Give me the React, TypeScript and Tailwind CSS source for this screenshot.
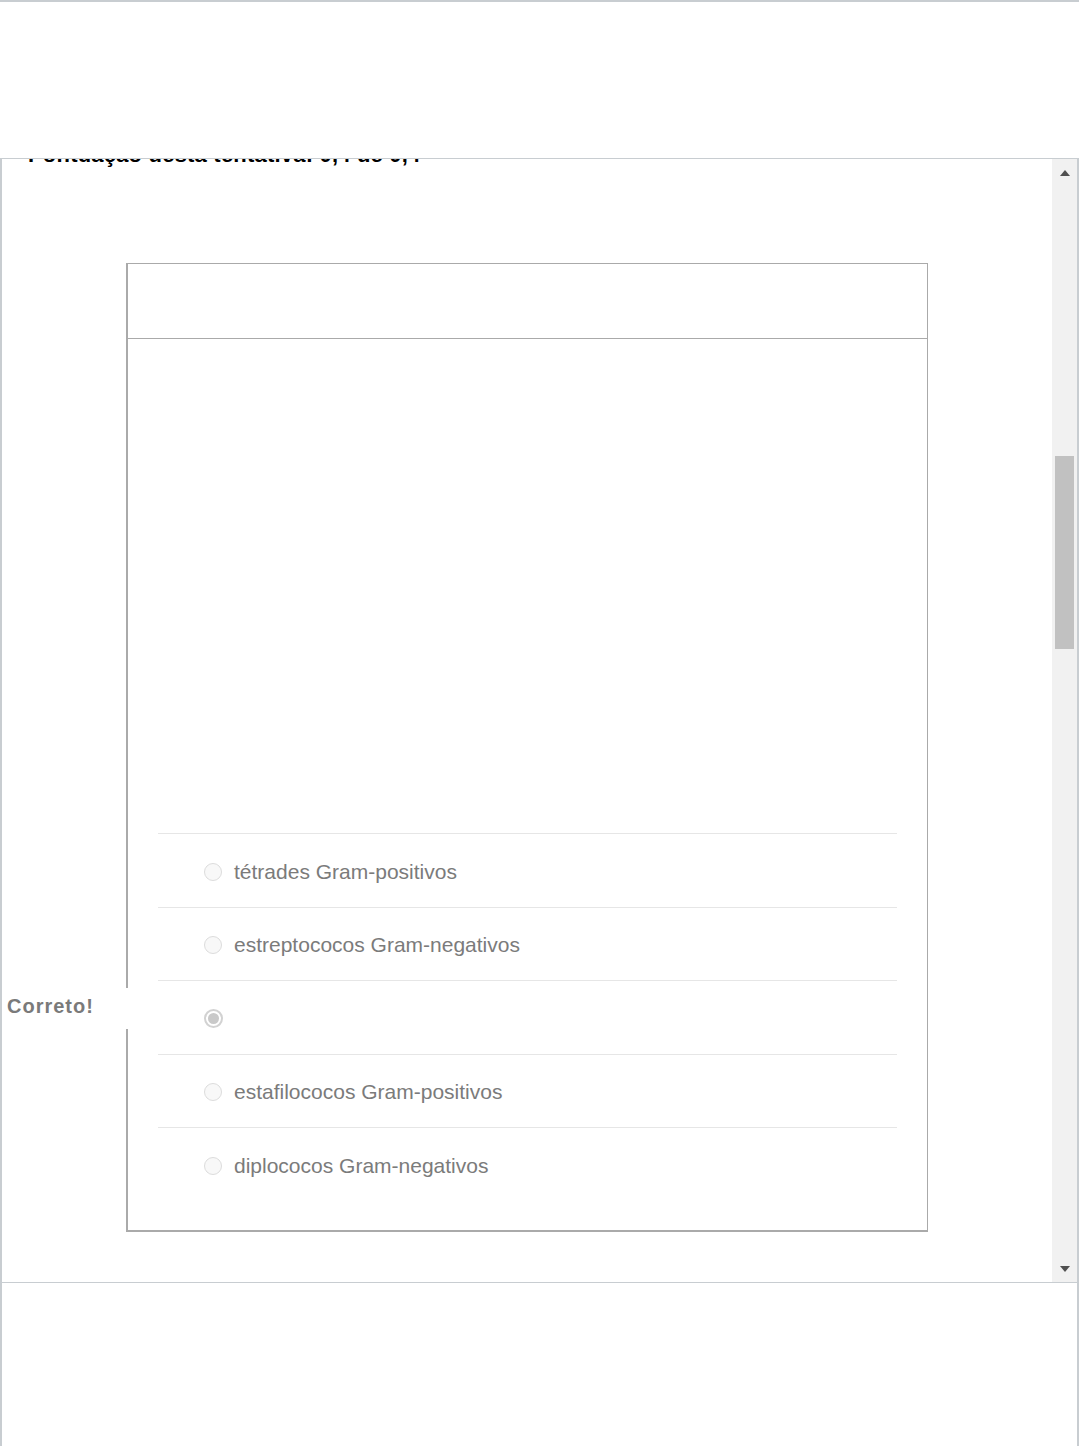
import React from "react";

const answers = [
  { text: "tétrades Gram-positivos", h: "h-[75px]", selected: false },
  { text: "estreptococos Gram-negativos", h: "h-[73px]", selected: false },
  { text: "", h: "h-[74px]", selected: true },
  { text: "estafilococos Gram-positivos", h: "h-[73px]", selected: false },
  { text: "diplococos Gram-negativos", h: "h-[74px]", selected: false },
];

function Radio({ selected }: { selected: boolean }) {
  if (selected) {
    return (
      <span className="flex h-[19px] w-[19px] shrink-0 items-center justify-center rounded-full border-2 border-[#d2d2d2] bg-white">
        <span className="h-[11px] w-[11px] rounded-full bg-[#c9c9c9]" />
      </span>
    );
  }
  return <span className="h-[18px] w-[18px] shrink-0 rounded-full border border-[#dcdcdc] bg-[#f8f8f8]" />;
}

export default function App() {
  return (
    <div className="w-[1079px] h-[1446px] overflow-hidden bg-white" style={{ fontFamily: '"Liberation Sans", Arial, sans-serif' }}>
      <div className="h-[2px] bg-[#c8cdd1]" />
      <div className="h-[156px]" />
      <div className="h-[1288px] border-l-2 border-r-2 border-[#c8cdd1]">
        <div className="flex h-[1125px] border-t border-b border-[#c8cdd1]">
          <div className="relative w-[1050px] overflow-hidden">
            <div className="mt-[-17px] pl-[26px] text-[22px] font-bold leading-[26px] tracking-[0.2px] text-black">
              Pontuação desta tentativa: 0,4 de 0,4
            </div>
            <div className="relative mx-auto mt-[95px] w-[802px] border-t border-r border-l-2 border-b-2 border-[#aaaaaa] bg-white">
              <div className="h-[75px] border-b border-[#aaaaaa]" />
              <div className="px-[30px] pt-[494px] pb-[28px]">
                {answers.map((a, i) => (
                  <div key={i} className={`flex items-center ${a.h} ${i < 4 ? "border-b border-[#e6e6e6]" : ""} ${i === 0 ? "border-t" : ""} pl-[46px] pt-[2px]`}>
                    <Radio selected={a.selected} />
                    <span className="ml-[12px] text-[21px] leading-[24px] text-[#7b7b7b]">{a.text}</span>
                  </div>
                ))}
              </div>
              <div className="absolute left-[-124px] top-[724px] h-[41px] w-[130px] bg-white pl-[3px] pt-[7px]">
                <span className="text-[20px] font-bold leading-[23px] tracking-[1px] text-[#7a7a7a]">Correto!</span>
              </div>
            </div>
          </div>
          <div className="flex w-[25px] flex-col bg-[#f1f1f1]">
            <div className="flex h-[27px] items-center justify-center">
              <svg width="10" height="6" viewBox="0 0 10 6"><polygon points="5,0 10,6 0,6" fill="#505050" /></svg>
            </div>
            <div className="mx-[3px] mt-[270px] h-[193px] bg-[#c1c1c1]" />
            <div className="flex-1" />
            <div className="flex h-[27px] items-center justify-center">
              <svg width="10" height="6" viewBox="0 0 10 6"><polygon points="0,0 10,0 5,6" fill="#505050" /></svg>
            </div>
          </div>
        </div>
      </div>
    </div>
  );
}
